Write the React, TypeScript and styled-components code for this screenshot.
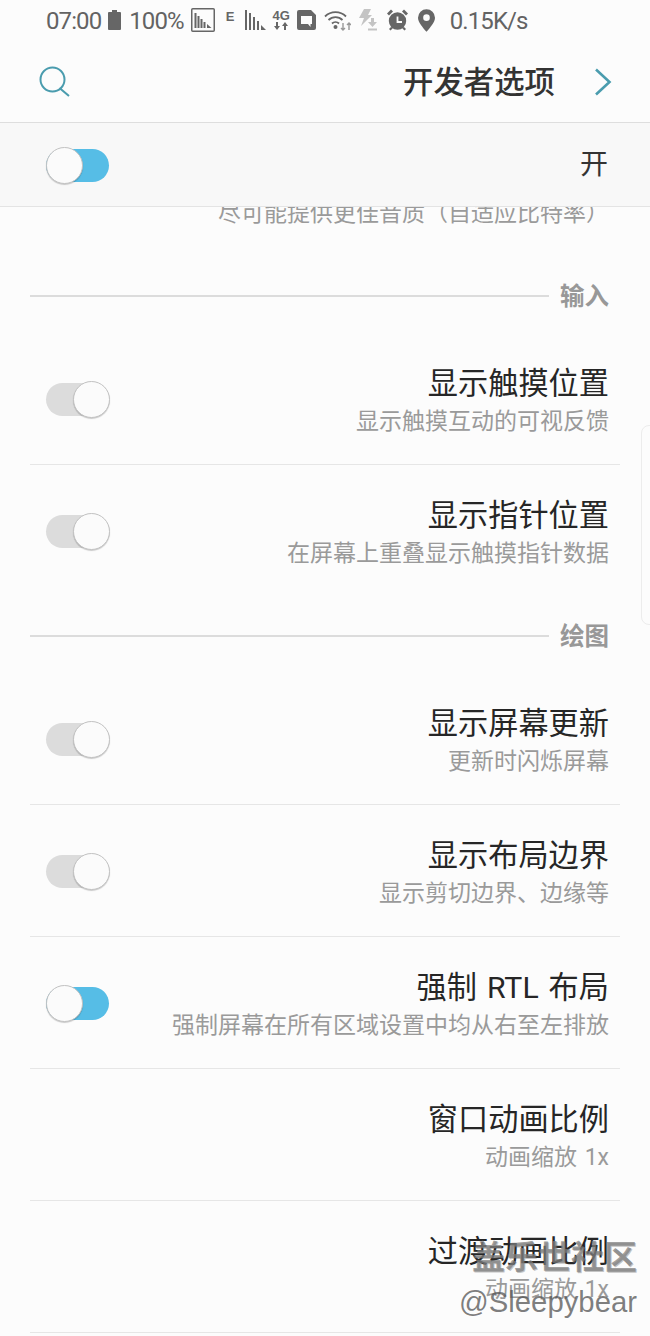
import React from 'react'
import styled, { createGlobalStyle } from 'styled-components'

const cjk = `Roboto, 'Noto Sans CJK SC', sans-serif`

const GlobalStyle = createGlobalStyle`
  html, body {
    margin: 0;
    padding: 0;
    background: #fcfcfc;
    font-family: ${cjk};
  }
`

const Page = styled.div`
  position: relative;
  width: 650px;
  height: 1336px;
  overflow: hidden;
  background: #fcfcfc;
`

const StatusBar = styled.div`
  height: 42px;
  padding-left: 46px;
  display: flex;
  align-items: center;
  color: #636363;
  font-size: 24px;
  letter-spacing: -0.9px;
  box-sizing: border-box;
`

const StatusText = styled.span<{ $gap?: number }>`
  margin-left: ${p => p.$gap ?? 0}px;
  line-height: 42px;
  white-space: nowrap;
`

const StatusIcon = styled.svg<{ $gap?: number }>`
  margin-left: ${p => p.$gap ?? 0}px;
  margin-bottom: 2px;
  flex: none;
`

const EdgeLabel = styled.span`
  width: 8px;
  margin: 0 0 10px 11px;
  font-family: 'Liberation Sans', sans-serif;
  font-size: 13px;
  font-weight: 700;
  line-height: 13px;
  letter-spacing: 0;
  color: #666;
`

const NetworkType = styled.div`
  width: 17px;
  margin: 0 0 2px 7px;
  display: flex;
  flex-direction: column;
  align-items: center;
  color: #666;
`

const NetworkLabel = styled.span`
  font-family: 'Liberation Sans', sans-serif;
  font-size: 13px;
  font-weight: 700;
  line-height: 12px;
  letter-spacing: 0;
`

const Header = styled.div`
  height: 80px;
  padding: 0 38px 0 39px;
  display: flex;
  align-items: center;
  border-bottom: 1px solid #dedede;
`

const HeaderTitle = styled.div`
  margin: 2px 0 0 auto;
  font-size: 30.400px;
  font-weight: 500;
  color: #333;
  line-height: 40px;
`

const HeaderChevron = styled.svg`
  margin-left: 39px;
`

const MasterBar = styled.div`
  height: 83px;
  padding: 0 42px 0 46px;
  display: flex;
  align-items: center;
  justify-content: space-between;
  background: #f8f8f8;
  border-bottom: 1px solid #e4e4e4;
  color: #333;
`

const MasterLabel = styled.span`
  font-size: 28px;
  line-height: 36px;
  margin-top: 1px;
`

const Switch = styled.div<{ $on?: boolean }>`
  position: relative;
  width: 63px;
  height: 33px;
  margin-top: 1px;
  border-radius: 17px;
  background: ${p => (p.$on ? '#56bde6' : '#dcdcdc')};
  flex: none;

  &::after {
    content: '';
    position: absolute;
    box-sizing: border-box;
    top: -2px;
    left: ${p => (p.$on ? '0' : '27px')};
    width: 37px;
    height: 37px;
    border-radius: 50%;
    background: #fbfbfb;
    border: 1px solid #c2c2c2;
    box-shadow: 0 1px 1px rgba(0, 0, 0, 0.2);
  }
`

const ClippedLine = styled.div`
  height: 22px;
  padding-right: 41px;
  overflow: hidden;
  display: flex;
  align-items: flex-end;
  justify-content: flex-end;
  color: #9a9a9a;
  font-size: 23px;
  line-height: 30px;
  white-space: nowrap;
`

const Section = styled.div<{ $height: number }>`
  height: ${p => p.$height}px;
  box-sizing: border-box;
  margin-right: 41px;
  padding: 0 0 22px 30px;
  display: flex;
  align-items: flex-end;
  gap: 11px;
  color: #989898;
  font-size: 24.500px;
  font-weight: 700;
  line-height: 28px;
`

const SectionLine = styled.div`
  flex: 1;
  height: 2px;
  margin-bottom: 14px;
  background: #dcdcdc;
`

const Row = styled.div<{ $last?: boolean }>`
  height: 131px;
  margin: 0 30px;
  padding: 0 11px 0 16px;
  display: flex;
  align-items: center;
  justify-content: space-between;
  border-bottom: 1px solid ${p => (p.$last ? 'transparent' : '#e6e6e6')};
`

const RowText = styled.div`
  margin: 6px 0 0 auto;
  text-align: right;
  white-space: nowrap;
`

const RowTitle = styled.div`
  font-size: 30.200px;
  line-height: 40px;
  word-spacing: 2.500px;
  color: #262626;
`

const RowSub = styled.div`
  font-size: 23px;
  line-height: 34px;
  margin-top: 1px;
  word-spacing: 2px;
  color: #9a9a9a;
`

const EdgeHandle = styled.div`
  position: absolute;
  top: 425px;
  right: -6px;
  width: 13px;
  height: 198px;
  border: 1px solid #ececec;
  border-radius: 8px 0 0 8px;
`

const Watermark = styled.div`
  position: absolute;
  right: 13px;
  top: 1237px;
  text-align: right;
  white-space: nowrap;
`

const WatermarkTitle = styled.div`
  font-size: 33px;
  line-height: 42px;
  font-weight: 700;
  color: rgba(125, 125, 125, 0.72);
  text-shadow: 1px 1px 0 rgba(90, 90, 90, 0.35);
`

const WatermarkName = styled.div`
  margin-top: 4px;
  font-size: 29.300px;
  line-height: 38px;
  color: rgba(85, 85, 85, 0.75);
  font-family: 'Liberation Sans', sans-serif;
`

type Item = { title: string; sub: string; toggle?: 'on' | 'off'; last?: boolean }

const inputItems: Item[] = [
  { title: '显示触摸位置', sub: '显示触摸互动的可视反馈', toggle: 'off' },
  { title: '显示指针位置', sub: '在屏幕上重叠显示触摸指针数据', toggle: 'off', last: true },
]

const drawingItems: Item[] = [
  { title: '显示屏幕更新', sub: '更新时闪烁屏幕', toggle: 'off' },
  { title: '显示布局边界', sub: '显示剪切边界、边缘等', toggle: 'off' },
  { title: '强制 RTL 布局', sub: '强制屏幕在所有区域设置中均从右至左排放', toggle: 'on' },
  { title: '窗口动画比例', sub: '动画缩放 1x' },
  { title: '过渡动画比例', sub: '动画缩放 1x' },
]

const SettingRow = ({ item }: { item: Item }) => (
  <Row $last={item.last}>
    {item.toggle && <Switch $on={item.toggle === 'on'} />}
    <RowText>
      <RowTitle>{item.title}</RowTitle>
      <RowSub>{item.sub}</RowSub>
    </RowText>
  </Row>
)

export default function App() {
  return (
    <Page>
      <GlobalStyle />
      <StatusBar>
        <StatusText>07:00</StatusText>
        <StatusIcon $gap={7} width="13" height="20" viewBox="0 0 13 20" fill="#666">
          <path d="M4 0h5v2h3a1 1 0 0 1 1 1v16a1 1 0 0 1-1 1H1a1 1 0 0 1-1-1V3a1 1 0 0 1 1-1h3z" />
        </StatusIcon>
        <StatusText $gap={8}>100%</StatusText>
        <StatusIcon $gap={7} width="24" height="24" viewBox="0 0 24 24" fill="#666">
          <rect x="0.750" y="0.750" width="22.500" height="22.500" rx="1" fill="none" stroke="#666" strokeWidth="1.500" />
          <rect x="3.500" y="5" width="2" height="15" />
          <rect x="6.500" y="8" width="2" height="12" />
          <rect x="9.500" y="11" width="2" height="9" />
          <rect x="12.500" y="14" width="2" height="6" />
          <path d="M16 16l4.500 4H16z" />
        </StatusIcon>
        <EdgeLabel>E</EdgeLabel>
        <StatusIcon $gap={11} width="21" height="20" viewBox="0 0 21 20" fill="#666">
          <rect x="0" y="0" width="2" height="20" />
          <rect x="4" y="3" width="2" height="17" />
          <rect x="8" y="7" width="2" height="13" />
          <rect x="12" y="11" width="2" height="9" />
          <path d="M16 15l5 5h-5z" />
        </StatusIcon>
        <NetworkType>
          <NetworkLabel>4G</NetworkLabel>
          <svg width="17" height="8" viewBox="0 0 17 8" fill="#666">
            <path d="M3 0h2v4h2L4 8 1 4h2zM11 8h2V4h2l-3-4-3 4h2z" />
          </svg>
        </NetworkType>
        <StatusIcon $gap={7} width="19" height="20" viewBox="0 0 19 20" fill="#666">
          <path fillRule="evenodd" d="M2 0h12l5 5v13a2 2 0 0 1-2 2H2a2 2 0 0 1-2-2V2a2 2 0 0 1 2-2zM4 6v8h7l2.500 3v-3H15V6z" />
        </StatusIcon>
        <StatusIcon $gap={8} width="27" height="22" viewBox="0 0 27 22" fill="none">
          <path d="M1 7.500a15 15 0 0 1 21 0M4.500 11a10 10 0 0 1 14 0M8 14.500a5 5 0 0 1 7 0" stroke="#666" strokeWidth="1.800" />
          <circle cx="11.500" cy="18" r="2" fill="#666" />
          <path d="M19 14v7M17 19l2 2 2-2M25 21v-7M23 16l2-2 2 2" stroke="#999" strokeWidth="1.400" />
        </StatusIcon>
        <StatusIcon $gap={8} width="18" height="22" viewBox="0 0 18 22" fill="#c4c4c4">
          <path d="M5 0h7L9 6h4L2 17l3-8H0z" />
          <path d="M12 9h3v4h3l-4.500 5L9 13h3zM9 19.500h9v2H9z" />
        </StatusIcon>
        <StatusIcon $gap={10} width="21" height="22" viewBox="0 0 21 22" fill="#666">
          <circle cx="10.500" cy="12" r="8.700" />
          <path d="M0 4.500 4 .5l2 2-4 4zM21 4.500l-4-4-2 2 4 4zM4 18l-2 2 1.500 1.500L6 19zM17 18l2 2-1.500 1.500L15 19z" />
          <path d="M10.500 7.500V13h4.500" fill="none" stroke="#fcfcfc" strokeWidth="1.800" />
        </StatusIcon>
        <StatusIcon $gap={10} width="17" height="23" viewBox="0 0 18 24" fill="#666">
          <path fillRule="evenodd" d="M9 0a9 9 0 0 1 9 9c0 5-5 10-9 15C5 19 0 14 0 9a9 9 0 0 1 9-9zm0 5.500a3.500 3.500 0 1 0 0 7 3.500 3.500 0 0 0 0-7z" />
        </StatusIcon>
        <StatusText $gap={15}>0.15K/s</StatusText>
      </StatusBar>
      <Header>
        <svg width="32" height="32" viewBox="0 0 32 32" fill="none" stroke="#4a9cae" strokeWidth="2">
          <circle cx="13.500" cy="13.500" r="12" />
          <path d="M20.500 22l9.500 8" />
        </svg>
        <HeaderTitle>开发者选项</HeaderTitle>
        <HeaderChevron width="18" height="28" viewBox="0 0 18 28" fill="none" stroke="#4a9cae" strokeWidth="2.600">
          <path d="M2 1.500 15.500 14 2 26.500" />
        </HeaderChevron>
      </Header>
      <MasterBar>
        <Switch $on />
        <MasterLabel>开</MasterLabel>
      </MasterBar>
      <ClippedLine>尽可能提供更佳音质（自适应比特率）</ClippedLine>
      <Section $height={104}>
        <SectionLine />
        输入
      </Section>
      {inputItems.map(item => (
        <SettingRow key={item.title} item={item} />
      ))}
      <Section $height={76}>
        <SectionLine />
        绘图
      </Section>
      {drawingItems.map(item => (
        <SettingRow key={item.title} item={item} />
      ))}
      <EdgeHandle />
      <Watermark>
        <WatermarkTitle>盖乐世社区</WatermarkTitle>
        <WatermarkName>@Sleepybear</WatermarkName>
      </Watermark>
    </Page>
  )
}
